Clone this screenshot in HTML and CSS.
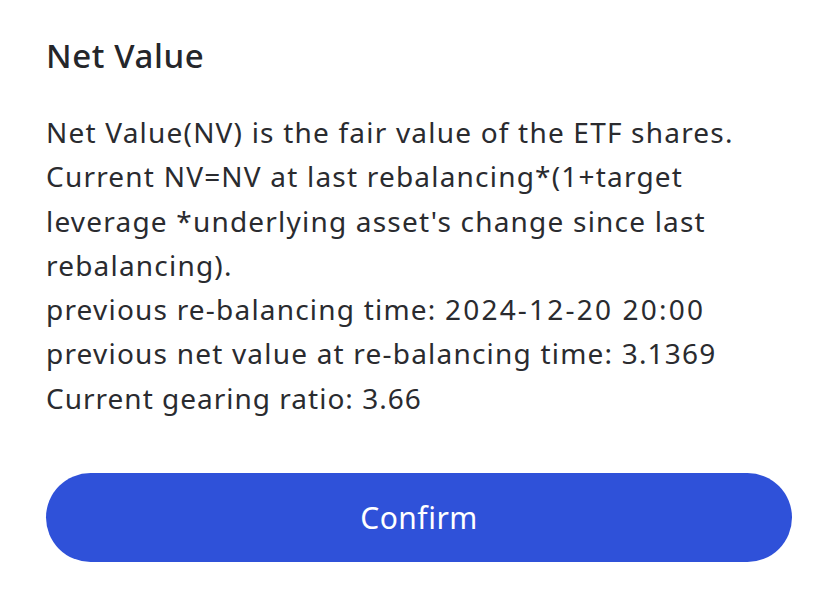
FILE: index.html
```html
<!DOCTYPE html>
<html>
<head>
<meta charset="utf-8">
<link rel="stylesheet" href="styles.css">
</head>
<body>
<div class="sheet">
  <h1 class="title">Net Value</h1>
  <div class="desc">
    <p>Net Value(NV) is the fair value of the ETF shares.</p>
    <p>Current NV=NV at last rebalancing*(1+target leverage *underlying asset's change since last rebalancing).</p>
    <p>previous re-balancing time: <span class="date">2024-12-20 20:00</span></p>
    <p>previous net value at re-balancing time: 3.1369</p>
    <p class="tight">Current gearing ratio: 3.66</p>
  </div>
  <button class="confirm">Confirm</button>
</div>
</body>
</html>
```
FILE: styles.css
```css
html, body {
  margin: 0;
  background: #ffffff;
}
.sheet {
  font-family: "Noto Sans", sans-serif;
  color: #25262a;
  padding: 36px 38px 0 46px;
  display: flex;
  flex-direction: column;
}
.title {
  margin: 0;
  font-size: 33px;
  font-weight: 500;
  line-height: 40px;
  letter-spacing: 0.6px;
}
.desc {
  margin-top: 34px;
  font-size: 28px;
  line-height: 44.3px;
  letter-spacing: 1.2px;
  color: #2a2b2f;
}
.desc p {
  margin: 0;
}
.desc .date {
  letter-spacing: 2.2px;
}
.desc .tight {
  letter-spacing: 1px;
}
.confirm {
  margin-top: 53px;
  height: 89px;
  border: none;
  border-radius: 45px;
  background: #2f51d9;
  color: #ffffff;
  font-family: "Noto Sans", sans-serif;
  font-size: 30px;
  letter-spacing: 0.5px;
  width: 746px;
  padding: 0;
}
```
